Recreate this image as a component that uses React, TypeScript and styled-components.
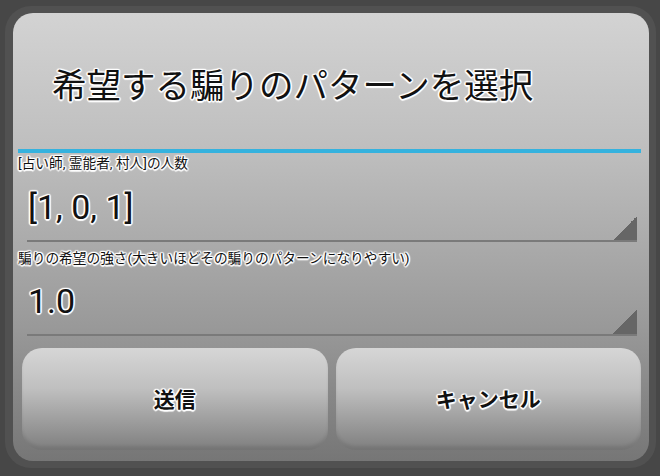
import React from 'react';
import styled, { createGlobalStyle } from 'styled-components';

const GlobalStyle = createGlobalStyle`
  html, body {
    margin: 0;
    padding: 0;
    background: #474747;
  }
  body {
    font-family: Roboto, "Noto Sans CJK JP", sans-serif;
  }
`;

const halo = `
  text-shadow:
    1px 1px 1px #fff, -1px -1px 1px #fff, 1px -1px 1px #fff, -1px 1px 1px #fff,
    0 1.5px 1px #fff, 0 -1.5px 1px #fff, 1.5px 0 1px #fff, -1.5px 0 1px #fff,
    0 0 2px #fff;
`;

const Screen = styled.div`
  width: 660px;
  height: 476px;
  box-sizing: border-box;
  padding: 6px 4px 8px 5px;
`;

const Frame = styled.div`
  height: 100%;
  box-sizing: border-box;
  padding: 7px 7px 7px 8px;
  background: #515151;
  border-radius: 26px;
`;

const Panel = styled.div`
  height: 100%;
  box-sizing: border-box;
  display: flex;
  flex-direction: column;
  border-radius: 20px;
  background: linear-gradient(to bottom, #d3d3d3 0%, #bdbdbd 32%, #999 70%, #767676 100%);
  padding: 0 8px 11px 0;
  overflow: hidden;
`;

const Header = styled.div`
  height: 136px;
  display: flex;
  align-items: center;
  padding: 3px 0 0 39px;
  box-sizing: border-box;
  font-size: 34.5px;
  color: #111;
  ${halo}
`;

const Divider = styled.div`
  height: 4px;
  margin: 0 0 0 5px;
  background: #35b2de;
`;

const Label = styled.div`
  padding-left: 5px;
  font-size: 13.7px;
  line-height: 20px;
  color: #111;
  white-space: nowrap;
  ${halo}
`;

const Field = styled.div<{ $height: number }>`
  position: relative;
  height: ${(p) => p.$height}px;
  margin: 0 4px 0 14px;
  border-bottom: 2px solid #7a7a7a;
  display: flex;
  align-items: center;
  padding-left: 1px;
  font-size: 34px;
  color: #111;
  ${halo}
`;

const Corner = styled.div`
  position: absolute;
  right: 0;
  bottom: 0;
  width: 24px;
  height: 24px;
  background: linear-gradient(to bottom right, transparent 50%, #666 50%);
`;

const Buttons = styled.div`
  display: flex;
  gap: 8px;
  margin: 12px 0 0 9px;
  flex: 1;
`;

const Button = styled.button`
  flex: 1;
  border: none;
  border-radius: 20px;
  background: linear-gradient(to bottom, #d6d6d6 0%, #bfbfbf 40%, #8f8f8f 85%, #7e7e7e 100%);
  box-shadow: inset 0 -4px 3px rgba(0, 0, 0, 0.08);
  font-family: Roboto, "Noto Sans CJK JP", sans-serif;
  font-size: 21px;
  font-weight: 700;
  color: #111;
  padding: 0 0 2px;
  ${halo}
`;

export default function App() {
  return (
    <>
      <GlobalStyle />
      <Screen>
        <Frame>
          <Panel>
            <Header>希望する騙りのパターンを選択</Header>
            <Divider />
            <Label>[占い師, 霊能者, 村人]の人数</Label>
            <Field $height={67}>
              [1, 0, 1]
              <Corner />
            </Field>
            <Label style={{ marginTop: 6 }}>騙りの希望の強さ(大きいほどその騙りのパターンになりやすい)</Label>
            <Field $height={66}>
              1.0
              <Corner />
            </Field>
            <Buttons>
              <Button>送信</Button>
              <Button>キャンセル</Button>
            </Buttons>
          </Panel>
        </Frame>
      </Screen>
    </>
  );
}
